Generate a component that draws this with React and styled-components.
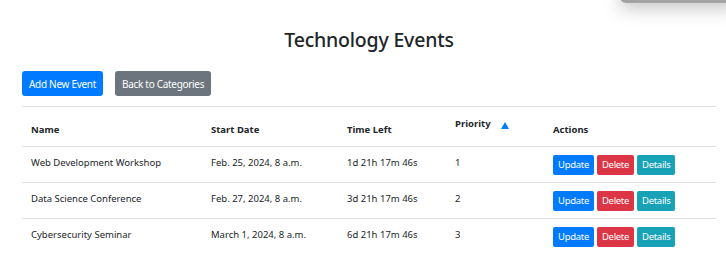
import React from 'react'
import styled, { createGlobalStyle } from 'styled-components'

const GlobalStyle = createGlobalStyle`
  body {
    margin: 0;
    background: #fff;
    font-family: "Noto Sans", "Open Sans", sans-serif;
    color: #212529;
  }
`

const events = [
  { name: 'Web Development Workshop', start: 'Feb. 25, 2024, 8 a.m.', left: '1d 21h 17m 46s', priority: 1 },
  { name: 'Data Science Conference', start: 'Feb. 27, 2024, 8 a.m.', left: '3d 21h 17m 46s', priority: 2 },
  { name: 'Cybersecurity Seminar', start: 'March 1, 2024, 8 a.m.', left: '6d 21h 17m 46s', priority: 3 },
]

function App() {
  return (
    <Page>
      <GlobalStyle />
      <Popover />
      <Title>Technology Events</Title>
      <Toolbar>
        <Btn variant="primary">Add New Event</Btn>
        <Btn variant="secondary">Back to Categories</Btn>
      </Toolbar>
      <Table>
        <colgroup>
          <col style={{ width: 180 }} />
          <col style={{ width: 136 }} />
          <col style={{ width: 108 }} />
          <col style={{ width: 98 }} />
          <col />
        </colgroup>
        <thead>
          <tr>
            <Th>Name</Th>
            <Th>Start Date</Th>
            <Th>Time Left</Th>
            <Th>
              <SortHead>
                Priority
                <SortArrow />
              </SortHead>
            </Th>
            <Th>Actions</Th>
          </tr>
        </thead>
        <tbody>
          {events.map(ev => (
            <tr key={ev.name}>
              <Td>{ev.name}</Td>
              <Td>{ev.start}</Td>
              <Td>{ev.left}</Td>
              <Td>{ev.priority}</Td>
              <Td>
                <Actions>
                  <SmallBtn variant="primary">Update</SmallBtn>
                  <SmallBtn variant="danger">Delete</SmallBtn>
                  <SmallBtn variant="info">Details</SmallBtn>
                </Actions>
              </Td>
            </tr>
          ))}
        </tbody>
      </Table>
    </Page>
  )
}

export default App

const colors = {
  primary: '#007bff',
  secondary: '#6c757d',
  danger: '#dc3545',
  info: '#17a2b8',
}

const Page = styled.div`
  position: relative;
  height: 276px;
  overflow: hidden;
  padding: 0 10px 0 22px;
`

const Popover = styled.div`
  position: absolute;
  top: -20px;
  right: -12px;
  width: 118px;
  height: 23px;
  background: #a3a3a3;
  border-radius: 6px;
  box-shadow: 0 6px 18px rgba(0, 0, 0, 0.22);
`

const Title = styled.h2`
  margin: 0;
  padding-top: 27px;
  text-align: center;
  font-size: 19.5px;
  font-weight: 500;
  line-height: 26px;
  letter-spacing: -0.2px;
`

const Toolbar = styled.div`
  display: flex;
  gap: 12px;
  margin-top: 18px;
`

const Btn = styled.button`
  height: 25px;
  padding: 0 7px;
  border: none;
  border-radius: 3px;
  background: ${p => colors[p.variant]};
  color: #fff;
  font-family: inherit;
  font-size: 10px;
  letter-spacing: -0.3px;
  cursor: pointer;
`

const Table = styled.table`
  width: 100%;
  margin-top: 10px;
  border-collapse: collapse;
  table-layout: fixed;
  border-top: 1px solid #dee2e6;
  font-size: 9.5px;
`

const Th = styled.th`
  padding: 9px;
  height: 21px;
  text-align: left;
  vertical-align: bottom;
  font-weight: 700;
  font-size: 9.5px;
  line-height: 14px;
  border-bottom: 1.5px solid #dee2e6;
`

const SortHead = styled.div`
  display: flex;
  align-items: flex-start;
  gap: 10px;
  position: relative;
  top: -6px;
`

const SortArrow = styled.span`
  margin-top: 5px;
  width: 0;
  height: 0;
  border-left: 4.5px solid transparent;
  border-right: 4.5px solid transparent;
  border-bottom: 7px solid #007bff;
`

const Td = styled.td`
  height: 36px;
  padding: 0 9px 4px;
  box-sizing: border-box;
  vertical-align: middle;
  line-height: 14px;
  border-top: 1px solid #dee2e6;
  white-space: nowrap;
`

const Actions = styled.div`
  display: flex;
  gap: 3px;
  margin-top: 4px;
`

const SmallBtn = styled.button`
  height: 20px;
  padding: 0 5px;
  border: none;
  border-radius: 2px;
  background: ${p => colors[p.variant]};
  color: #fff;
  font-family: inherit;
  font-size: 9.5px;
  letter-spacing: -0.3px;
  cursor: pointer;
`
